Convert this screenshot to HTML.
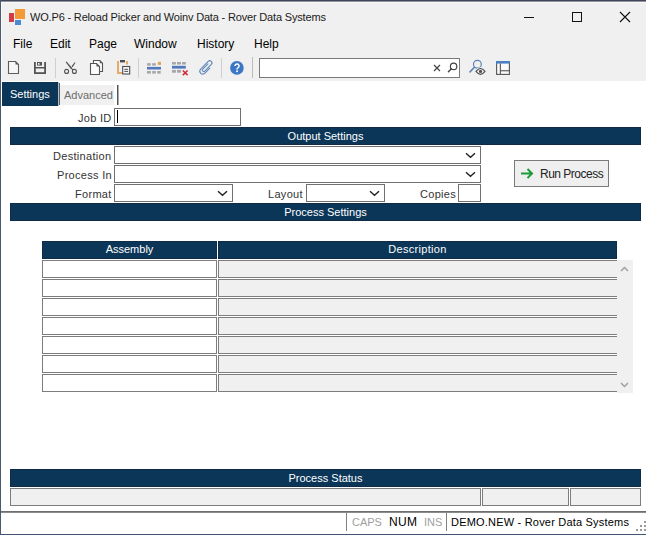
<!DOCTYPE html>
<html><head><meta charset="utf-8">
<style>
*{margin:0;padding:0;box-sizing:border-box}
html,body{width:646px;height:535px;overflow:hidden;background:#f0f0f0;font-family:"Liberation Sans",sans-serif;color:#000}
.a{position:absolute}
#win{position:absolute;left:0;top:0;width:646px;height:535px;background:#f0f0f0;overflow:hidden}
.t{position:absolute;white-space:nowrap;line-height:1}
.bar{position:absolute;left:10px;width:631px;height:18px;background:#0b3658;box-shadow:inset 0 0 0 1px #0e2c48;color:#fff;font-size:11px;text-align:center;line-height:18px}
.inp{position:absolute;background:#fff;border:1px solid #707070}
.lbl{position:absolute;font-size:11px;white-space:nowrap;line-height:1;color:#333;letter-spacing:0.3px}
.sel{position:absolute;background:#fff;border:1px solid #707070;height:18px}
.chev{position:absolute;right:4px;top:5px}
.cell{position:absolute;left:42px;width:175px;height:18px;background:#fff;border:1px solid #7d7d7d}
.dcell{position:absolute;left:218px;width:399px;height:18px;background:#f0f0f0;border-top:1px solid #7d7d7d;border-bottom:1px solid #7d7d7d;border-left:1px solid #7d7d7d}
.sf{position:absolute;background:#f0f0f0;border:1px solid #7d7d7d;top:488px;height:18px}
.menu{position:absolute;top:38px;font-size:12px;line-height:1;color:#000}
</style></head><body>
<div id="win">
  <!-- borders -->
  <div class="a" style="left:0;top:0;width:646px;height:1px;background:#42475c"></div><div class="a" style="left:0;top:1px;width:646px;height:1px;background:#8d909c"></div><div class="a" style="left:0;top:2px;width:646px;height:1px;background:#fafafc"></div>
  <div class="a" style="left:0;top:0;width:1px;height:535px;background:#4b5a6e"></div><div class="a" style="left:1px;top:2px;width:1px;height:532px;background:#fafafa"></div>

  <!-- title -->
  <div class="a" style="left:9px;top:13px;width:5px;height:9px;background:#d63b45"></div>
  <div class="a" style="left:15px;top:9px;width:10px;height:10px;background:#f39a37"></div>
  <div class="a" style="left:15px;top:20px;width:6px;height:5px;background:#4a8ad0"></div>
  <div class="t" style="left:30px;top:12px;font-size:11px;color:#1a1a1a;letter-spacing:-0.17px">WO.P6 - Reload Picker and Woinv Data - Rover Data Systems</div>
  <div class="a" style="left:524px;top:17px;width:10px;height:1px;background:#111"></div>
  <div class="a" style="left:572px;top:12px;width:10px;height:10px;border:1px solid #111"></div>
  <svg class="a" style="left:619px;top:11px" width="12" height="12"><path d="M1 1L11 11M11 1L1 11" stroke="#111" stroke-width="1.1"/></svg>

  <!-- menu -->
  <div class="menu" style="left:13px">File</div>
  <div class="menu" style="left:50px">Edit</div>
  <div class="menu" style="left:89px">Page</div>
  <div class="menu" style="left:134px">Window</div>
  <div class="menu" style="left:197px">History</div>
  <div class="menu" style="left:254px">Help</div>

  <!-- toolbar -->
  <div class="a" style="left:259px;top:58px;width:201px;height:20px;background:#fff;border:1px solid #7a7a7a"></div>
  <svg class="a" style="left:0;top:0" width="646" height="82" viewBox="0 0 646 82">
<!-- new -->
<path d="M8.5 61.5H15.5L18.5 64.5V73.5H8.5Z" fill="#f6f6f6" stroke="#5c5c5c" stroke-width="1.1"/>
<path d="M15.5 61.5V64.5H18.5Z" fill="#555"/>
<!-- save -->
<g fill="#555">
<rect x="34" y="62" width="1.8" height="12"/><rect x="44.2" y="62" width="1.8" height="12"/>
<rect x="34" y="72.2" width="12" height="1.8"/><rect x="34" y="67" width="12" height="1.5"/>
<rect x="37" y="62" width="5" height="3.6"/>
</g>
<rect x="38" y="63" width="1.5" height="1.8" fill="#eee"/>
<!-- sep -->
<rect x="55" y="58" width="1" height="20" fill="#cfcfcf"/>
<!-- scissors -->
<path d="M65.6 61.9L66.6 61.6L72.6 68.6L71.2 69.6Z" fill="#555"/>
<path d="M72 69L73 70" stroke="#555" stroke-width="1"/>
<path d="M74.7 62.2L75.5 62.8L72.6 67.2L71.5 66.3Z" fill="#555"/>
<circle cx="66.6" cy="71.4" r="2" fill="none" stroke="#555" stroke-width="1.1"/>
<circle cx="74.4" cy="71.4" r="2" fill="none" stroke="#555" stroke-width="1.1"/>
<!-- copy -->
<path d="M93.5 63V60.5H99.8L102.5 63.2V71.5H99.8" fill="#fafafa" stroke="#555" stroke-width="1.1"/>
<path d="M99.8 60.5V63.2H102.5Z" fill="#555"/>
<path d="M90.5 63.5H96.5L99.5 66.5V74.5H90.5Z" fill="#fafafa" stroke="#555" stroke-width="1.1"/>
<path d="M96.5 63.5V66.5H99.5Z" fill="#555"/>
<!-- paste -->
<path d="M118 61V73H122" fill="none" stroke="#e6aa6a" stroke-width="2"/>
<path d="M127 61V64.5" fill="none" stroke="#e6aa6a" stroke-width="2"/>
<rect x="120" y="60" width="5" height="2.4" fill="#4d4d4d"/>
<rect x="122.7" y="66.5" width="7" height="7.5" fill="#fafafa" stroke="#4d4d4d" stroke-width="1.1"/>
<rect x="124.3" y="68.8" width="3.8" height="1" fill="#4d4d4d"/>
<rect x="124.3" y="70.9" width="3.8" height="1" fill="#4d4d4d"/>
<!-- sep -->
<rect x="138" y="58" width="1" height="20" fill="#cfcfcf"/>
<!-- insert row -->
<g fill="#a6a6ab">
<rect x="147" y="63.2" width="3.8" height="2.4"/><rect x="152.2" y="63.2" width="3.6" height="2.4"/>
<rect x="147" y="71" width="3.8" height="2.6"/><rect x="152.2" y="71" width="3.6" height="2.6"/><rect x="157.2" y="71" width="3.5" height="2.6"/>
</g>
<rect x="157.8" y="61.9" width="3.2" height="3" fill="#dba45c"/>
<rect x="147" y="66.9" width="14" height="2.6" fill="#5279bd"/>
<!-- delete row -->
<g fill="#a6a6ab">
<rect x="172" y="62" width="3.9" height="2.5"/><rect x="177" y="62" width="4" height="2.5"/><rect x="182.1" y="62" width="3.7" height="2.5"/>
<rect x="172" y="69.9" width="3.9" height="2.8"/><rect x="177" y="69.9" width="4" height="2.8"/>
</g>
<rect x="172" y="65.8" width="13.8" height="2.8" fill="#5279bd"/>
<path d="M182.8 70.5L187.6 75.1M187.6 70.5L182.8 75.1" stroke="#d22b3b" stroke-width="1.6"/>
<!-- paperclip -->
<g transform="translate(206.4 67.4) rotate(44)" fill="none" stroke="#6088ba" stroke-width="1.1">
<path d="M-1.3 -4V3.8A1.4 1.4 0 0 0 1.5 3.8V-5.5A2.2 2.2 0 0 0 -2.9 -5.5V5.2A2.95 2.95 0 0 0 3 5.2V-2.2"/>
</g>
<!-- sep -->
<rect x="221" y="58" width="1" height="20" fill="#cfcfcf"/>
<!-- help -->
<circle cx="236.9" cy="67.9" r="6.8" fill="#3b77c4"/>
<path d="M235 66.1A2.05 2.05 0 1 1 237.9 67.9C237.2 68.3 237 68.7 237 69.4" fill="none" stroke="#fff" stroke-width="1.5"/>
<rect x="236.2" y="70.4" width="1.7" height="1.7" fill="#fff"/>
<!-- sep -->
<rect x="252" y="57" width="1" height="21" fill="#bdbdbd"/>
<!-- search x, magnifier -->
<path d="M434 65L440 71M440 65L434 71" stroke="#444" stroke-width="1.2"/>
<circle cx="453.6" cy="66.4" r="3.2" fill="none" stroke="#444" stroke-width="1.2"/>
<path d="M451.4 68.8L448.4 71.8" stroke="#444" stroke-width="1.4" stroke-linecap="round"/>
<!-- magnifier eye -->
<circle cx="477.4" cy="64.2" r="3.9" fill="none" stroke="#5a86bd" stroke-width="1.2"/>
<path d="M474.4 67.3L470 71.9" stroke="#5a86bd" stroke-width="1.6" stroke-linecap="round"/>
<path d="M476 71.4Q480.5 65.6 485 71.4Q480.5 77.2 476 71.4Z" fill="#f4f4f4" stroke="#f0f0f0" stroke-width="2.6"/>
<path d="M476 71.4Q480.5 65.6 485 71.4Q480.5 77.2 476 71.4Z" fill="#f4f4f4" stroke="#505050" stroke-width="1.15"/>
<circle cx="480.5" cy="71.4" r="1.6" fill="#505050"/>
<!-- layout -->
<rect x="496.6" y="61.6" width="12.8" height="12.8" fill="#fafafa" stroke="#555" stroke-width="1.1"/>
<rect x="496" y="61" width="14" height="2.6" fill="#4a80c4"/>
<rect x="499.8" y="63.5" width="1.1" height="10.5" fill="#555"/>
<rect x="500" y="70.2" width="9.5" height="1.1" fill="#555"/>
</svg>


  <!-- content -->
  <div class="a" style="left:1px;top:81px;width:645px;height:430px;background:#fff"></div>
  <div class="a" style="left:2px;top:82px;width:56px;height:24px;background:#0b3658"></div>
  <div class="a" style="left:58px;top:82px;width:1px;height:24px;background:#b4bcc6"></div><div class="a" style="left:59px;top:83px;width:1px;height:22px;background:#5e5e5e"></div>
  <div class="t" style="left:10px;top:89px;font-size:11px;color:#fff">Settings</div>
  <div class="a" style="left:60px;top:85px;width:54px;height:20px;background:#f0f0f0"></div>
  <div class="t" style="left:64px;top:90px;font-size:11px;color:#6d6d6d">Advanced</div>
  <div class="a" style="left:117px;top:85px;width:1px;height:20px;background:#555"></div><div class="a" style="left:118px;top:85px;width:1px;height:20px;background:#aaa"></div>

  <div class="lbl" style="left:78px;top:113px">Job ID</div>
  <div class="inp" style="left:114px;top:108px;width:127px;height:18px"></div>
  <div class="a" style="left:117px;top:110px;width:1px;height:13px;background:#000"></div>

  <div class="bar" style="top:127px">Output Settings</div>
  <div class="lbl" style="left:53px;top:151px">Destination</div>
  <div class="sel" style="left:114px;top:146px;width:367px"><svg class="chev" width="11" height="7" viewBox="0 0 11 7"><path d="M1 1.3L5.5 5.3L10 1.3" fill="none" stroke="#1e1e1e" stroke-width="1.35"/></svg></div>
  <div class="lbl" style="left:57px;top:170px">Process In</div>
  <div class="sel" style="left:114px;top:165px;width:367px"><svg class="chev" width="11" height="7" viewBox="0 0 11 7"><path d="M1 1.3L5.5 5.3L10 1.3" fill="none" stroke="#1e1e1e" stroke-width="1.35"/></svg></div>
  <div class="lbl" style="left:75px;top:189px">Format</div>
  <div class="sel" style="left:114px;top:184px;width:119px"><svg class="chev" width="11" height="7" viewBox="0 0 11 7"><path d="M1 1.3L5.5 5.3L10 1.3" fill="none" stroke="#1e1e1e" stroke-width="1.35"/></svg></div>
  <div class="lbl" style="left:268px;top:189px">Layout</div>
  <div class="sel" style="left:306px;top:184px;width:79px"><svg class="chev" width="11" height="7" viewBox="0 0 11 7"><path d="M1 1.3L5.5 5.3L10 1.3" fill="none" stroke="#1e1e1e" stroke-width="1.35"/></svg></div>
  <div class="lbl" style="left:420px;top:189px">Copies</div>
  <div class="inp" style="left:458px;top:184px;width:23px;height:18px"></div>

  <div class="a" style="left:514px;top:160px;width:95px;height:27px;background:#efefef;border:1px solid #7a7a7a"></div>
  <svg class="a" style="left:520px;top:168px" width="14" height="11" viewBox="0 0 14 11"><path d="M1 5.5H12M7.5 1L12 5.5L7.5 10" fill="none" stroke="#1d9a3c" stroke-width="2"/></svg>
  <div class="t" style="left:540px;top:168px;font-size:12px;letter-spacing:-0.5px;color:#222">Run Process</div>

  <div class="bar" style="top:203px">Process Settings</div>

  <div class="a" style="left:42px;top:241px;width:175px;height:18px;background:#0b3658;box-shadow:inset 0 0 0 1px #0e2c48"></div>
  <div class="a" style="left:218px;top:241px;width:399px;height:18px;background:#0b3658;box-shadow:inset 0 0 0 1px #0e2c48"></div>
  <div class="t" style="left:42px;top:244px;width:175px;text-align:center;font-size:11px;color:#fff">Assembly</div>
  <div class="t" style="left:218px;top:244px;width:399px;text-align:center;font-size:11px;letter-spacing:0.3px;color:#fff">Description</div>
  <div class="cell" style="top:260px"></div><div class="dcell" style="top:260px"></div>
  <div class="cell" style="top:279px"></div><div class="dcell" style="top:279px"></div>
  <div class="cell" style="top:298px"></div><div class="dcell" style="top:298px"></div>
  <div class="cell" style="top:317px"></div><div class="dcell" style="top:317px"></div>
  <div class="cell" style="top:336px"></div><div class="dcell" style="top:336px"></div>
  <div class="cell" style="top:355px"></div><div class="dcell" style="top:355px"></div>
  <div class="cell" style="top:374px"></div><div class="dcell" style="top:374px"></div>

  <div class="a" style="left:617px;top:260px;width:16px;height:133px;background:#f0f0f0"></div>
  <svg class="a" style="left:620px;top:265px" width="9" height="8"><path d="M1 6L4.5 2.5L8 6" fill="none" stroke="#a0a0a0" stroke-width="1.5"/></svg>
  <svg class="a" style="left:620px;top:381px" width="9" height="8"><path d="M1 2L4.5 5.5L8 2" fill="none" stroke="#a0a0a0" stroke-width="1.5"/></svg>

  <div class="bar" style="top:469px">Process Status</div>
  <div class="sf" style="left:10px;width:471px"></div>
  <div class="sf" style="left:482px;width:87px"></div>
  <div class="sf" style="left:570px;width:71px"></div>

  <!-- status bar -->
  <div class="a" style="left:1px;top:511px;width:645px;height:1px;background:#6e6e6e"></div><div class="a" style="left:1px;top:512px;width:645px;height:1px;background:#8c8c8c"></div>
  <div class="a" style="left:1px;top:513px;width:645px;height:21px;background:#fff"></div>
  <div class="a" style="left:346px;top:513px;width:1px;height:18px;background:#808080"></div>
  <div class="a" style="left:446px;top:513px;width:1px;height:18px;background:#808080"></div>
  <div class="t" style="left:352px;top:517px;font-size:11px;color:#a0a0a0">CAPS</div>
  <div class="t" style="left:389px;top:516px;font-size:12px;letter-spacing:0.3px;color:#000">NUM</div>
  <div class="t" style="left:424px;top:517px;font-size:11px;color:#a0a0a0">INS</div>
  <div class="t" style="left:451px;top:517px;font-size:11px;letter-spacing:0.2px;color:#000">DEMO.NEW - Rover Data Systems</div>
  <div class="a" style="left:644px;top:521px;width:2px;height:2px;background:#999"></div>
  <div class="a" style="left:640px;top:525px;width:2px;height:2px;background:#999"></div>
  <div class="a" style="left:644px;top:525px;width:2px;height:2px;background:#999"></div>
  <div class="a" style="left:636px;top:529px;width:2px;height:2px;background:#999"></div>
  <div class="a" style="left:640px;top:529px;width:2px;height:2px;background:#999"></div>
  <div class="a" style="left:644px;top:529px;width:2px;height:2px;background:#999"></div>
  <div class="a" style="left:0;top:534px;width:646px;height:1px;background:#3f5573"></div>
</div>
</body></html>
